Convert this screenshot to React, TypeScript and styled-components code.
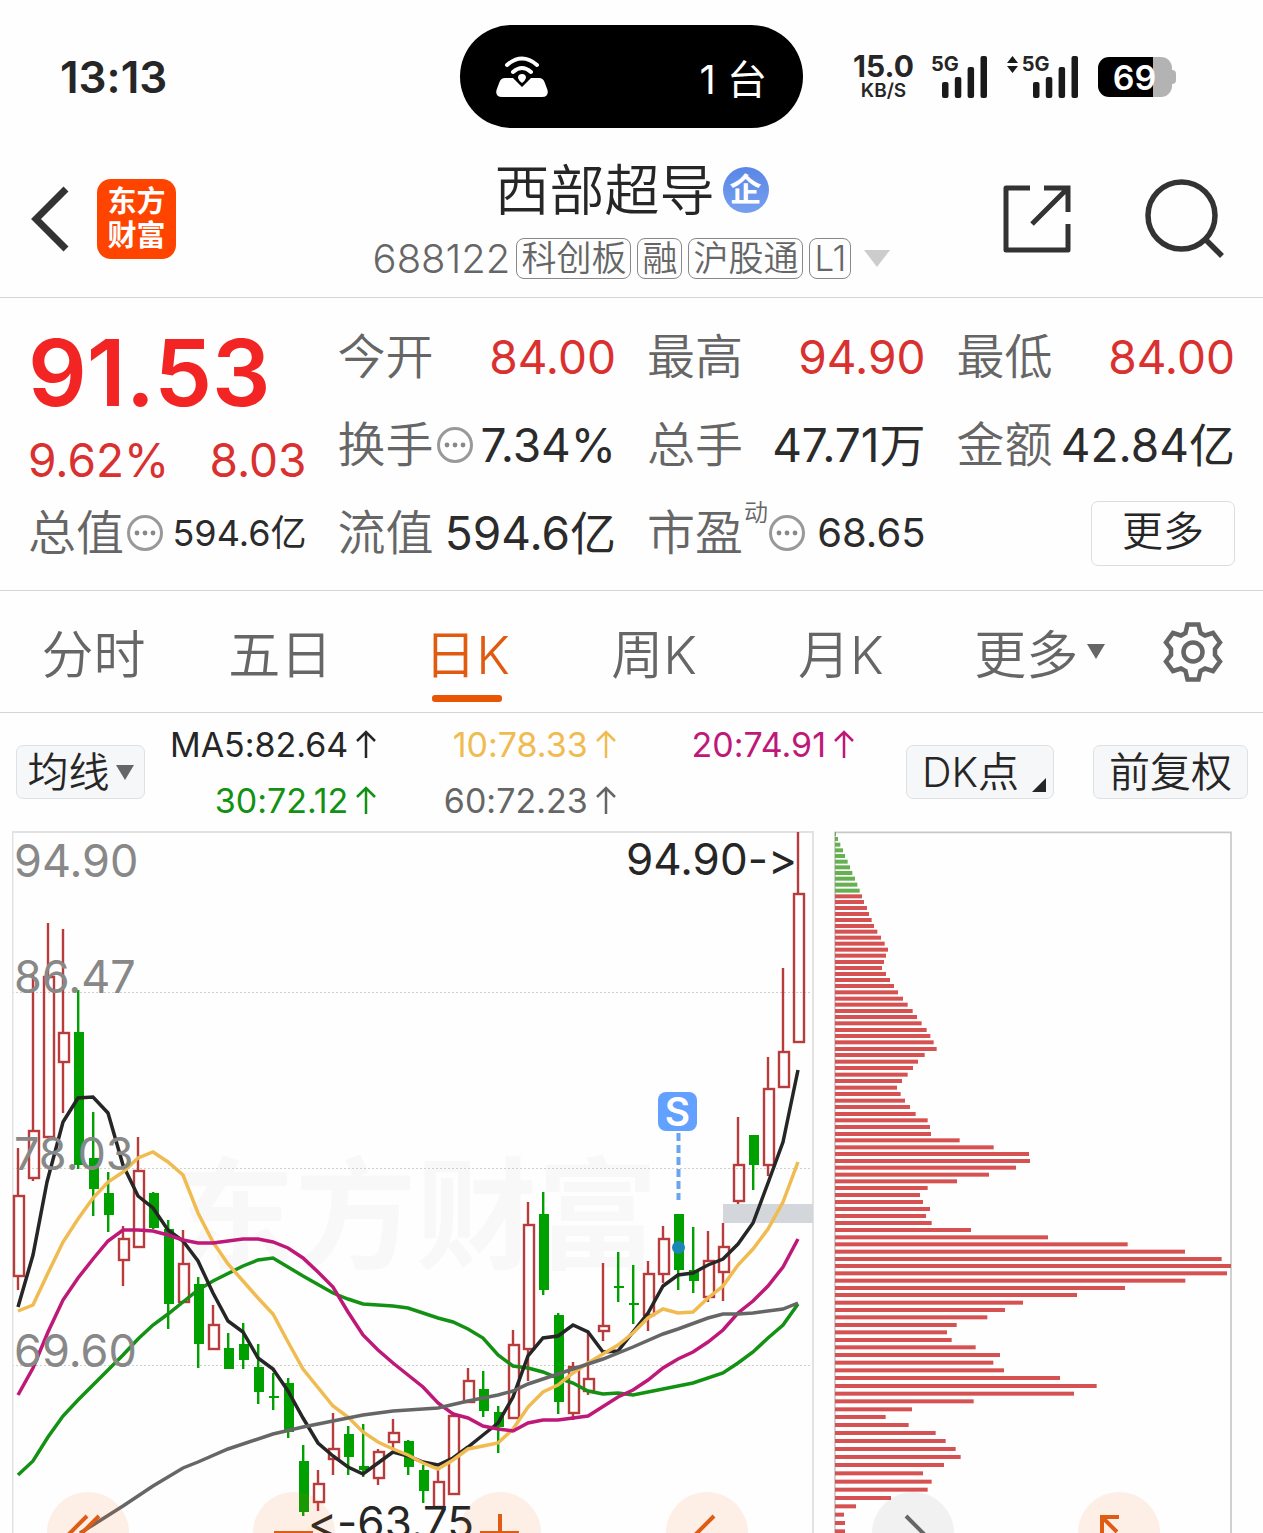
import React from "react";
import styled, { createGlobalStyle } from "styled-components";

const GlobalStyle = createGlobalStyle`
  * { box-sizing: border-box; }
  body {
    margin: 0;
    background: #fefefe;
    color: #262626;
    font-family: Inter, "Noto Sans CJK SC", sans-serif;
    font-feature-settings: "calt" 0;
  }
  button {
    font: inherit;
    color: inherit;
    background: none;
    border: 0;
    padding: 0;
    cursor: pointer;
  }
  svg { display: block; flex: none; }
`;

const Screen = styled.div`
  display: flex;
  flex-direction: column;
  height: 100vh;
  overflow: hidden;
`;

/* ---------- status bar ---------- */

const StatusBar = styled.header`
  display: grid;
  grid-template-columns: 1fr auto 1fr;
  align-items: center;
  flex: none;
  padding: 25px 0 13px;
`;

const Clock = styled.time`
  padding-left: 60px;
  font-size: 44px;
  font-weight: 600;
  line-height: 48px;
`;

const Island = styled.div`
  display: flex;
  align-items: center;
  justify-content: space-between;
  width: 343px;
  height: 103px;
  padding: 0 36px;
  border-radius: 52px;
  background: #000;
  color: #fff;
  font-size: 40px;
  font-weight: 400;
`;

const StatusIcons = styled.div`
  display: flex;
  align-items: center;
  padding-left: 49px;
`;

const Speed = styled.div`
  display: flex;
  flex-direction: column;
  align-items: center;
  width: 63px;
  margin-right: 16px;
  font-weight: 700;
`;

const SpeedValue = styled.span`
  font-size: 30px;
  line-height: 28px;
`;

const SpeedUnit = styled.span`
  font-size: 19px;
  font-weight: 600;
  line-height: 22px;
`;

const Signal = styled.div`
  display: flex;
  align-items: flex-start;
  height: 42px;
  margin-right: 20px;
`;

const SignalLabel = styled.span`
  margin-right: -17px;
  font-size: 20px;
  font-weight: 700;
  line-height: 17px;
`;

const Battery = styled.div`
  position: relative;
  width: 74px;
  height: 40px;
  border-radius: 11px;
  background: linear-gradient(90deg, #000 55px, #b3b3b3 55px);
  color: #fff;
  font-size: 34px;
  font-weight: 600;
  line-height: 42px;
  text-align: center;
  &::after {
    content: "";
    position: absolute;
    top: 13px;
    right: -4px;
    width: 4px;
    height: 14px;
    border-radius: 0 4px 4px 0;
    background: #b3b3b3;
  }
`;

/* ---------- title bar ---------- */

const TitleBar = styled.div`
  display: grid;
  grid-template-columns: 1fr auto 1fr;
  align-items: center;
  flex: none;
  padding: 18px 0;
  border-bottom: 1px solid #d5d5d5;
`;

const TitleLeft = styled.div`
  display: flex;
  align-items: center;
  gap: 28px;
  padding-left: 31px;
`;

const TitleRight = styled.div`
  display: flex;
  align-items: center;
  justify-content: flex-end;
  gap: 74px;
  padding-right: 38px;
`;

const Logo = styled.div`
  display: grid;
  place-content: center;
  width: 79px;
  height: 80px;
  border-radius: 14px;
  background: #ff4400;
  color: #fff;
  font-size: 29px;
  font-weight: 700;
  line-height: 34px;
  text-align: center;
`;

const TitleCenter = styled.div`
  display: flex;
  flex-direction: column;
  align-items: center;
  gap: 17px;
`;

const Name = styled.h1`
  display: flex;
  align-items: center;
  gap: 8px;
  margin: 0;
  font-size: 55px;
  font-weight: 350;
  line-height: 62px;
`;

const Badge = styled.span`
  display: grid;
  place-content: center;
  width: 46px;
  height: 46px;
  border-radius: 50%;
  background: linear-gradient(#5a86e6, #76a0ee);
  color: #fff;
  font-size: 32px;
  font-weight: 700;
  line-height: 40px;
`;

const Code = styled.div`
  display: flex;
  align-items: center;
  gap: 6px;
  color: #666;
  font-size: 40px;
  font-weight: 350;
  line-height: 41px;
`;

const Tag = styled.span`
  padding: 0 4px;
  border: 1px solid #888;
  border-radius: 8px;
  font-size: 35px;
  line-height: 39px;
`;

const CodeMenu = styled.button`
  padding-left: 7px;
`;

/* ---------- quote ---------- */

const Quote = styled.section`
  display: grid;
  grid-template-columns: repeat(4, 1fr);
  grid-template-rows: repeat(3, 88px);
  column-gap: 31px;
  flex: none;
  padding: 15px 28px 13px;
  border-bottom: 1px solid #d5d5d5;
`;

const Headline = styled.div`
  grid-row: span 2;
  display: flex;
  flex-direction: column;
  color: #d93030;
`;

const Price = styled.strong`
  color: #f22424;
  font-size: 92px;
  font-weight: 600;
  line-height: 120px;
`;

const Change = styled.div`
  display: flex;
  justify-content: space-between;
  font-size: 46px;
  font-weight: 375;
  line-height: 54px;
`;

const Cell = styled.div`
  display: flex;
  align-items: center;
  justify-content: space-between;
  white-space: nowrap;
`;

const Label = styled.span`
  display: flex;
  align-items: center;
  gap: 3px;
  color: #666;
  font-size: 48px;
  font-weight: 350;
  line-height: 60px;
`;

const Sup = styled.sup`
  align-self: flex-start;
  margin: 0 -2px;
  font-size: 24px;
  line-height: 20px;
`;

const Value = styled.span<{ $size?: number; $up?: boolean }>`
  color: ${(p) => (p.$up ? "#d93030" : "#2b2b2b")};
  font-size: ${(p) => p.$size ?? 46}px;
  font-weight: 375;
  line-height: 60px;
`;

const MoreButton = styled.button`
  align-self: center;
  justify-self: end;
  width: 144px;
  height: 65px;
  padding-bottom: 4px;
  border: 1px solid #ddd;
  border-radius: 7px;
  font-size: 41px;
  font-weight: 350;
  line-height: 56px;
`;

/* ---------- period tabs ---------- */

const Tabs = styled.nav`
  display: grid;
  grid-template-columns: repeat(5, 187fr) 211fr 95fr;
  flex: none;
  height: 122px;
  padding-right: 23px;
  border-bottom: 1px solid #d5d5d5;
`;

const Tab = styled.button<{ $active?: boolean }>`
  position: relative;
  display: flex;
  align-items: center;
  justify-content: center;
  gap: 9px;
  color: ${(p) => (p.$active ? "#e05a10" : "#666")};
  font-size: 52px;
  font-weight: 350;
  &::after {
    content: "";
    display: ${(p) => (p.$active ? "block" : "none")};
    position: absolute;
    bottom: 10px;
    width: 70px;
    height: 7px;
    border-radius: 3px;
    background: #ea5504;
  }
`;

/* ---------- moving averages ---------- */

const AverageBar = styled.section`
  display: flex;
  align-items: center;
  flex: none;
  height: 118px;
  padding: 0 15px 0 16px;
`;

const Legend = styled.div`
  flex: 1;
  display: grid;
  grid-template-columns: 232fr 240fr 239fr;
  grid-auto-rows: 56px;
  margin-right: 52px;
`;

const LegendItem = styled.span<{ $color: string }>`
  display: flex;
  align-items: center;
  justify-content: flex-end;
  gap: 8px;
  color: ${(p) => p.$color};
  font-size: 34px;
  font-weight: 375;
  white-space: nowrap;
`;

const Chip = styled.button<{ $width: number }>`
  display: flex;
  align-items: center;
  justify-content: center;
  gap: 6px;
  width: ${(p) => p.$width}px;
  height: 54px;
  border: 1px solid #dfe0e2;
  border-radius: 7px;
  background: #f6f7f9;
  font-size: 41px;
  font-weight: 350;
  line-height: 50px;
  white-space: nowrap;
  & + & { margin-left: 39px; }
`;

const CornerMark = styled.svg`
  align-self: flex-end;
  margin: 0 -8px 6px 7px;
`;

/* ---------- charts ---------- */

const Charts = styled.main`
  position: relative;
  flex: 1;
  min-height: 0;
  display: grid;
  grid-template-columns: 802fr 398fr;
  column-gap: 20px;
  align-items: start;
  padding: 0 31px 0 12px;
  overflow: hidden;
`;

const Plot = styled.svg`
  width: 100%;
  height: auto;
`;

const Toolbar = styled.div`
  position: absolute;
  right: 103px;
  bottom: -41px;
  left: 47px;
  display: flex;
  justify-content: space-between;
`;

const RoundButton = styled.button<{ $muted?: boolean }>`
  display: grid;
  place-content: center;
  width: 82px;
  height: 82px;
  border-radius: 50%;
  background: ${(p) => (p.$muted ? "rgba(0, 0, 0, 0.05)" : "rgba(245, 95, 15, 0.1)")};
  color: ${(p) => (p.$muted ? "#666" : "#de5c14")};
`;

const TriangleDown = ({ width, height, color }: { width: number; height: number; color: string }) => (
  <svg width={width} height={height} viewBox="0 0 18 15" preserveAspectRatio="none" aria-hidden="true">
    <path d="M0 0H18L9 15Z" fill={color} />
  </svg>
);

const Dots = () => (
  <svg width="36" height="36" viewBox="0 0 36 36" aria-hidden="true">
    <circle cx="18" cy="18" r="16.5" fill="none" stroke="#999" strokeWidth="3" />
    <g fill="#888">
      <circle cx="10" cy="18" r="2.4" />
      <circle cx="18" cy="18" r="2.4" />
      <circle cx="26" cy="18" r="2.4" />
    </g>
  </svg>
);

const ArrowUp = () => (
  <svg width="20" height="28" viewBox="0 0 20 28" fill="none" stroke="currentColor" strokeWidth="2.5" aria-hidden="true">
    <path d="M10 28V2M1 11L10 2L19 11" />
  </svg>
);

const SignalBars = () => (
  <svg width="45" height="42" viewBox="0 0 45 42" fill="#1a1a1a" aria-hidden="true">
    <rect x="0" y="26" width="6.5" height="16" rx="2" />
    <rect x="12.8" y="21" width="6.5" height="21" rx="2" />
    <rect x="25.6" y="11" width="6.5" height="31" rx="2" />
    <rect x="38.5" y="0" width="6.5" height="42" rx="2" />
  </svg>
);

const DataArrows = () => (
  <svg width="15" height="17" viewBox="0 0 15 17" fill="#1a1a1a" aria-hidden="true">
    <path d="M5.5 0L11 7H0ZM5.5 17L11 10H0Z" />
  </svg>
);

type Candle = [up: 0 | 1, high: number, top: number, bottom: number, low: number];

const candles: Candle[] = [
  [1, 1148, 1195, 1277, 1290], [1, 975, 1130, 1179, 1181], [1, 923, 976, 1138, 1138],
  [1, 929, 1032, 1063, 1113], [0, 990, 1032, 1165, 1169], [0, 1112, 1158, 1189, 1216],
  [0, 1172, 1193, 1215, 1232], [1, 1226, 1238, 1261, 1286], [1, 1137, 1170, 1248, 1248],
  [0, 1192, 1193, 1228, 1229], [0, 1220, 1229, 1304, 1329], [1, 1230, 1263, 1303, 1303],
  [0, 1277, 1284, 1344, 1368], [1, 1305, 1324, 1350, 1350], [0, 1333, 1348, 1369, 1369],
  [0, 1323, 1344, 1360, 1369], [0, 1344, 1367, 1392, 1404], [0, 1373, 1396, 1398, 1410],
  [0, 1378, 1383, 1432, 1438], [0, 1445, 1461, 1512, 1516], [1, 1470, 1483, 1503, 1511],
  [1, 1413, 1448, 1460, 1475], [0, 1426, 1434, 1457, 1475], [0, 1424, 1466, 1470, 1477],
  [1, 1449, 1451, 1479, 1485], [1, 1419, 1432, 1443, 1450], [0, 1440, 1441, 1467, 1475],
  [0, 1465, 1470, 1491, 1503], [1, 1470, 1481, 1508, 1508], [1, 1412, 1415, 1495, 1495],
  [1, 1368, 1380, 1403, 1403], [0, 1371, 1389, 1411, 1417], [0, 1406, 1412, 1427, 1453],
  [1, 1330, 1344, 1419, 1419], [1, 1202, 1224, 1350, 1381], [0, 1192, 1214, 1290, 1295],
  [0, 1313, 1315, 1402, 1414], [1, 1362, 1366, 1414, 1420], [1, 1332, 1378, 1392, 1395],
  [1, 1263, 1325, 1332, 1341], [0, 1252, 1286, 1288, 1302], [0, 1265, 1303, 1305, 1324],
  [1, 1261, 1273, 1316, 1331], [1, 1226, 1238, 1275, 1283], [0, 1214, 1214, 1270, 1290],
  [0, 1227, 1270, 1281, 1293], [1, 1231, 1260, 1298, 1302], [1, 1223, 1246, 1273, 1301],
  [1, 1117, 1164, 1202, 1204], [0, 1135, 1135, 1165, 1190], [1, 1057, 1088, 1166, 1176],
  [1, 968, 1051, 1088, 1088], [1, 832, 893, 1043, 1043],
];

const averages = [
  { color: "#139113", points: "18,1475 33,1461 48,1437 63,1416 78,1400 108,1370 123,1355 138,1339 153,1325 168,1314 183,1302 198,1290 213,1281 243,1266 258,1260 273,1258 303,1276 333,1293 348,1299 363,1304 393,1306 408,1308 423,1313 438,1318 453,1322 468,1329 483,1338 498,1355 513,1366 528,1368 543,1372 558,1378 573,1383 588,1391 603,1394 618,1393 633,1395 648,1392 678,1386 693,1383 723,1373 738,1363 753,1352 768,1338 783,1325 798,1304" },
  { color: "#262626", points: "18,1307 33,1255 47,1182 63,1122 78,1098 93,1097 108,1113 123,1165 138,1196 153,1208 168,1230 183,1241 198,1261 213,1293 228,1321 243,1332 258,1358 273,1369 288,1391 303,1418 318,1443 333,1456 348,1467 363,1474 378,1463 393,1452 408,1456 423,1462 438,1465 453,1458 468,1447 483,1435 498,1423 513,1397 528,1356 543,1338 558,1336 573,1325 588,1332 603,1352 618,1351 633,1332 648,1313 663,1286 678,1275 693,1273 708,1265 723,1259 738,1244 753,1223 768,1183 783,1142 798,1070" },
  { color: "#f0bb50", points: "18,1311 33,1305 48,1273 63,1242 78,1219 93,1198 108,1182 123,1172 138,1158 153,1152 168,1162 183,1175 198,1213 213,1242 228,1264 258,1298 273,1314 288,1342 303,1369 333,1406 348,1417 363,1432 378,1442 393,1449 408,1455 423,1463 438,1469 453,1460 468,1449 483,1446 498,1443 513,1429 528,1407 543,1392 558,1385 573,1373 588,1363 603,1354 618,1345 633,1333 648,1318 663,1309 678,1313 693,1312 708,1298 723,1286 738,1265 753,1249 768,1229 783,1202 798,1162" },
  { color: "#be1978", points: "18,1395 33,1368 48,1332 63,1300 78,1278 93,1259 108,1241 123,1230 138,1230 153,1231 168,1235 183,1240 198,1243 213,1243 243,1239 258,1239 273,1242 288,1248 303,1258 318,1272 333,1287 348,1312 363,1335 378,1350 393,1363 408,1375 423,1387 438,1403 453,1414 468,1418 483,1426 498,1429 513,1431 528,1423 543,1420 558,1420 588,1416 618,1397 633,1390 648,1380 663,1368 678,1359 693,1352 708,1342 723,1330 738,1313 753,1301 768,1286 783,1267 798,1239" },
  { color: "#666", points: "80,1533 93,1525 123,1506 153,1486 183,1468 198,1462 228,1449 273,1434 303,1427 333,1421 363,1415 393,1411 423,1409 438,1408 468,1401 498,1395 513,1391 528,1384 543,1379 573,1369 603,1359 633,1347 663,1334 678,1329 708,1318 723,1314 738,1314 753,1313 783,1309 798,1303" },
];

/* cost distribution, [centre, end] of each bar in thirds of a pixel */
const distribution: [number, number][] = [
  [27, 33], [42, 39], [59, 46], [76, 54], [93, 60], [110, 68], [127, 75], [144, 82], [161, 90], [179, 97], [197, 104],
  [214, 111], [231, 117], [249, 126], [267, 132], [285, 140], [303, 147], [320, 157], [338, 168], [356, 179],
  [374, 189], [392, 183], [411, 177], [429, 171], [447, 183], [465, 195], [483, 207], [502, 219], [521, 234],
  [539, 248], [558, 263], [576, 276], [595, 290], [615, 305], [633, 316], [652, 326], [672, 335], [690, 299],
  [710, 279], [729, 264], [749, 248], [768, 231], [788, 216], [807, 227], [827, 240], [846, 255], [867, 272],
  [886, 308], [906, 315], [927, 318], [946, 404], [967, 506], [987, 612], [1008, 615], [1028, 573], [1049, 492],
  [1069, 396], [1089, 308], [1110, 285], [1131, 294], [1152, 315], [1173, 303], [1194, 320], [1215, 438],
  [1237, 669], [1258, 908], [1280, 1080], [1302, 1190], [1323, 1218], [1345, 1206], [1367, 1081], [1389, 900],
  [1410, 756], [1433, 594], [1455, 540], [1477, 487], [1500, 395], [1522, 366], [1545, 380], [1567, 452],
  [1590, 525], [1613, 505], [1636, 537], [1659, 705], [1683, 815], [1706, 747], [1729, 446], [1753, 261],
  [1776, 182], [1800, 251], [1824, 332], [1848, 362], [1872, 392], [1896, 407], [1920, 357], [1945, 294],
  [1970, 320], [1994, 308], [2019, 198], [2044, 93], [2069, 57], [2094, 60], [2119, 60],
];

const PriceChart = () => (
  <Plot viewBox="12 831 802 702" role="img" aria-label="日K线图">
    <text x="174" y="1259" fontSize="121" fontWeight="700" fill="#f8f8f8">东方财富</text>
    <g stroke="#cfcfcf" strokeDasharray="2 2">
      <path d="M12 992.5H812M12 1168.5H812M12 1365.5H812" />
    </g>
    <path d="M12.5 1540V832H813V1540" fill="none" stroke="#e2e2e2" strokeWidth="2" />
    <rect x="723" y="1204" width="90" height="19" fill="#d3d7dc" />
    {candles.map(([up, high, top, bottom, low], i) => {
      const x = 18 + i * 15;
      return up ? (
        <g key={i} stroke="#b93c3c" strokeWidth="2.4" fill="none">
          <path d={`M${x} ${high}V${top}M${x} ${bottom}V${low}`} />
          <rect x={x - 4} y={top + 1} width="10" height={bottom - top - 2} />
        </g>
      ) : (
        <g key={i} fill="#00a000">
          <rect x={x - 1} y={high} width="2.4" height={low - high} />
          <rect x={x - 4} y={top} width="10" height={bottom - top} />
        </g>
      );
    })}
    {averages.map((line) => (
      <polyline key={line.color} points={line.points} fill="none" stroke={line.color} strokeWidth="3.5" />
    ))}
    <path d="M678.5 1133V1200" stroke="#6aa4ee" strokeWidth="4" strokeDasharray="8 4" />
    <rect x="658" y="1092" width="39" height="39" rx="8" fill="#62a1ff" />
    <text x="677.5" y="1126" fontSize="39" fontWeight="600" fill="#fff" textAnchor="middle">S</text>
    <circle cx="678.5" cy="1247.5" r="6.5" fill="#1a86b4" />
    <g fontSize="45" fontWeight="375" fill="#888">
      <text x="14" y="877">94.90</text>
      <text x="14" y="993">86.47</text>
      <text x="14" y="1170">78.03</text>
      <text x="14" y="1367">69.60</text>
    </g>
    <g fontSize="44" fontWeight="375" fill="#262626">
      <text x="797" y="875" textAnchor="end">94.90-&gt;</text>
      <text x="308" y="1538">&lt;-63.75</text>
    </g>
  </Plot>
);

const CostChart = () => (
  <Plot viewBox="27 18 1194 2106" role="img" aria-label="筹码分布">
    <path d="M30 2140V22H1218V2140" fill="none" stroke="#c8c8c8" strokeWidth="5" />
    {distribution.map(([y, end], i) => (
      <rect key={y} x="30" y={y - 6} width={end - 30} height="12" fill={i < 11 ? "#66b052" : "#d65252"} />
    ))}
  </Plot>
);

const tools = [
  { name: "快退", d: "M21 5L4 22L21 39M33 5L16 22L33 39" },
  { name: "缩小", d: "M2 22H41" },
  { name: "放大", d: "M22 3V41M2 22H41" },
  { name: "左移", d: "M29 5L12 22L29 39" },
  { name: "右移", d: "M15 5L32 22L15 39", muted: true },
  { name: "全屏", d: "M5 22V6H22M5 6L20 21M40 23V39H23M40 39L25 24" },
];

const quoteRows = [
  { label: "今开", value: "84.00", up: true },
  { label: "最高", value: "94.90", up: true },
  { label: "最低", value: "84.00", up: true },
  { label: "换手", dots: true, value: "7.34%" },
  { label: "总手", value: "47.71万" },
  { label: "金额", value: "42.84亿" },
  { label: "总值", dots: true, value: "594.6亿", size: 36 },
  { label: "流值", value: "594.6亿" },
  { label: "市盈", sup: "动", dots: true, value: "68.65", size: 40 },
];

const legend = [
  { text: "MA5:82.64", color: "#262626" },
  { text: "10:78.33", color: "#f0bb50" },
  { text: "20:74.91", color: "#be1978" },
  { text: "30:72.12", color: "#139113" },
  { text: "60:72.23", color: "#666" },
];

export default function App() {
  return (
    <Screen>
      <GlobalStyle />
      <StatusBar>
        <Clock>13:13</Clock>
        <Island>
          <svg width="52" height="42" viewBox="0 0 52 42" fill="none" aria-hidden="true">
            <path d="M9 22H17L26 31L35 22H43Q47 22 48.5 26L51.5 34Q53 41 46 41H6Q-1 41 .5 34L3.5 26Q5 22 9 22Z" fill="#fff" />
            <path d="M11 9Q26 -4 41 9M17 16Q26 8 35 16" stroke="#fff" strokeWidth="4" strokeLinecap="round" />
            <path d="M26 18Q30 18 30 22Q29 25 26 27Q23 25 22 22Q22 18 26 18Z" fill="#fff" />
          </svg>
          <span>1 台</span>
        </Island>
        <StatusIcons>
          <Speed>
            <SpeedValue>15.0</SpeedValue>
            <SpeedUnit>KB/S</SpeedUnit>
          </Speed>
          <Signal>
            <SignalLabel>5G</SignalLabel>
            <SignalBars />
          </Signal>
          <Signal>
            <DataArrows />
            <SignalLabel>5G</SignalLabel>
            <SignalBars />
          </Signal>
          <Battery>69</Battery>
        </StatusIcons>
      </StatusBar>

      <TitleBar>
        <TitleLeft>
          <button aria-label="返回">
            <svg width="38" height="66" viewBox="0 0 38 66" fill="none" stroke="#333" strokeWidth="7">
              <path d="M35 3L5 33L35 63" />
            </svg>
          </button>
          <Logo>
            <span>东方</span>
            <span>财富</span>
          </Logo>
        </TitleLeft>
        <TitleCenter>
          <Name>
            西部超导
            <Badge>企</Badge>
          </Name>
          <Code>
            688122
            <Tag>科创板</Tag>
            <Tag>融</Tag>
            <Tag>沪股通</Tag>
            <Tag>L1</Tag>
            <CodeMenu aria-label="展开">
              <TriangleDown width={26} height={17} color="#ccc" />
            </CodeMenu>
          </Code>
        </TitleCenter>
        <TitleRight>
          <button aria-label="分享">
            <svg width="68" height="68" viewBox="0 0 68 68" fill="none" stroke="#333" strokeWidth="5" strokeLinejoin="round">
              <path d="M27 3H3V65H65V39" />
              <path d="M41 3H65V27M65 3L29 39" strokeLinejoin="miter" />
            </svg>
          </button>
          <button aria-label="搜索">
            <svg width="80" height="80" viewBox="0 0 80 80" fill="none" stroke="#333" strokeWidth="5.5">
              <circle cx="36.5" cy="36.5" r="33.5" />
              <path d="M60 60L77 77" />
            </svg>
          </button>
        </TitleRight>
      </TitleBar>

      <Quote>
        <Headline>
          <Price>91.53</Price>
          <Change>
            <span>9.62%</span>
            <span>8.03</span>
          </Change>
        </Headline>
        {quoteRows.map((row, i) => (
          <Cell key={i}>
            <Label>
              {row.label}
              {row.sup && <Sup>{row.sup}</Sup>}
              {row.dots && <Dots />}
            </Label>
            <Value $up={row.up} $size={row.size}>{row.value}</Value>
          </Cell>
        ))}
        <MoreButton>更多</MoreButton>
      </Quote>

      <Tabs>
        <Tab>分时</Tab>
        <Tab>五日</Tab>
        <Tab $active>日K</Tab>
        <Tab>周K</Tab>
        <Tab>月K</Tab>
        <Tab>
          更多
          <TriangleDown width={18} height={15} color="#666" />
        </Tab>
        <Tab aria-label="设置">
          <svg width="60" height="60" viewBox="0 0 60 60" fill="none" stroke="#666" strokeWidth="4.5">
            <path d="M24.5 2.5H35.5L37.5 11L42 13.5L50 11L57 20.5L52 27V33L57 39.5L50 49L42 46.5L37.5 49L35.5 57.5H24.5L22.5 49L18 46.5L10 49L3 39.5L8 33V27L3 20.5L10 11L18 13.5L22.5 11Z" />
            <circle cx="30" cy="30" r="9.5" />
          </svg>
        </Tab>
      </Tabs>

      <AverageBar>
        <Chip $width={129}>
          均线
          <TriangleDown width={18} height={15} color="#666" />
        </Chip>
        <Legend>
          {legend.map((item) => (
            <LegendItem key={item.text} $color={item.color}>
              {item.text}
              <ArrowUp />
            </LegendItem>
          ))}
        </Legend>
        <Chip $width={148}>
          DK点
          <CornerMark width="14" height="14" viewBox="0 0 14 14" aria-hidden="true">
            <path d="M14 0V14H0Z" fill="#262626" />
          </CornerMark>
        </Chip>
        <Chip $width={155}>前复权</Chip>
      </AverageBar>

      <Charts>
        <PriceChart />
        <CostChart />
        <Toolbar>
          {tools.map((tool) => (
            <RoundButton key={tool.name} $muted={tool.muted} aria-label={tool.name}>
              <svg width="44" height="44" viewBox="0 0 44 44" fill="none" stroke="currentColor" strokeWidth="4">
                <path d={tool.d} />
              </svg>
            </RoundButton>
          ))}
        </Toolbar>
      </Charts>
    </Screen>
  );
}
